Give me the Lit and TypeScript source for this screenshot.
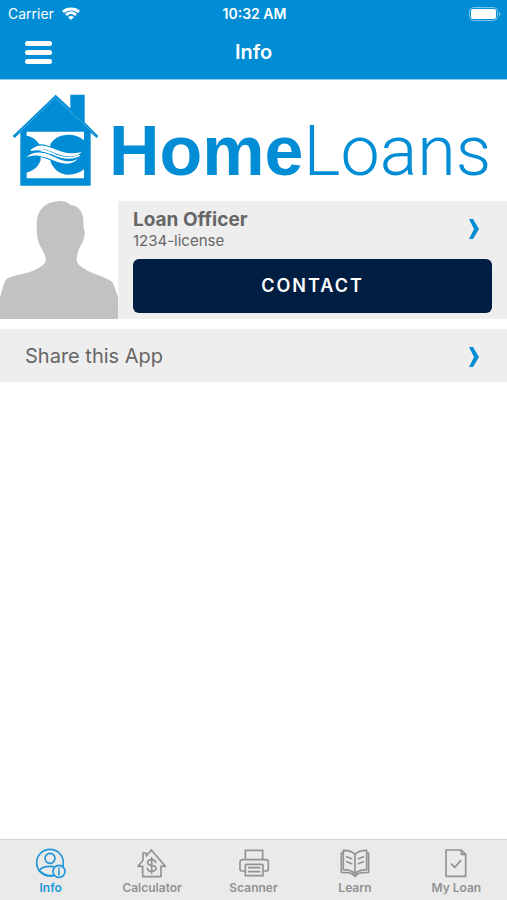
import { LitElement, html, css, svg } from "lit";
import { customElement, state } from "lit/decorators.js";
import { classMap } from "lit/directives/class-map.js";

const tabs = [
  {
    label: "Info",
    box: "108 36 96 96",
    icon: svg`
      <circle cx="153" cy="83" r="40"/>
      <circle cx="153" cy="70" r="15"/>
      <path d="M121 107C125 98 135 94 153 94C160 94 166 95 171 97M121 107C134 120 150 124 164 121"/>
      <circle cx="180" cy="109" r="18" class="knock"/>
      <path d="M180 107V119M180 99V101"/>`,
  },
  {
    label: "Calculator",
    box: "411 36 96 96",
    icon: svg`
      <path d="M457 45L499 94H486V125H431V94H417L432 76V54H442V63Z"/>
      <path d="M470 82C468 76 464 74 458 74C451 74 446 77 446 83C446 96 471 87 471 100C471 106 465 109 458 109C451 109 446 106 445 100M458 68V115"/>`,
  },
  {
    label: "Scanner",
    box: "112 36 96 96",
    icon: svg`
      <path d="M134 73V46H186V73M134 108H124Q118 108 118 102V82Q118 74 126 74H195Q203 74 203 82V102Q203 108 197 108H187"/>
      <path d="M134 122V91Q134 88 137 88H184Q187 88 187 91V122Z"/>
      <path d="M144 98H177M144 110H177"/>`,
  },
  {
    label: "Learn",
    box: "416 36 96 96",
    icon: svg`
      <path d="M464 58C456 49 442 46 429 46V104C442 104 456 107 464 117C472 107 486 104 499 104V46C486 46 472 49 464 58V117"/>
      <path d="M429 54H423V112C438 112 450 112 456 117L464 124L472 117C478 112 490 112 505 112V54H499"/>
      <path d="M439 65L454 71M439 80L454 86M489 65L474 71M489 80L474 86"/>`,
  },
  {
    label: "My Loan",
    box: "120 36 96 96",
    icon: svg`
      <path d="M138 45H184L197 58V124H138ZM184 45V58H197"/>
      <path d="M154 87L164 97L182 77"/>`,
  },
];

const chevron = html`<svg class="chevron" viewBox="0 0 12 20" aria-hidden="true">
  <path d="M1 0H5L11 10L5 20H1L6 10Z"/>
</svg>`;

@customElement("app-header")
class AppHeader extends LitElement {
  static styles = css`
    :host {
      display: block;
      background: #008dd5;
      color: #fff;
      border-bottom: 1px solid #8fcdec;
    }
    .status, .bar {
      display: grid;
      grid-template-columns: 1fr auto 1fr;
      align-items: center;
    }
    .status { height: 27px; padding: 0 6px 0 8px; font-size: 14px; }
    .carrier { display: flex; align-items: center; gap: 8px; }
    .time { font-weight: 600; }
    .wifi { width: 18px; height: 14px; fill: none; stroke: #fff; stroke-width: 3; }
    .wifi .dot { fill: #fff; stroke: none; }
    .battery { width: 32px; height: 14px; justify-self: end; }
    .bar { height: 50px; padding: 0 25px 2px; }
    .menu {
      display: flex; flex-direction: column; gap: 4px;
      width: 27px; padding: 0; border: 0; background: none; cursor: pointer;
    }
    .menu span { height: 5px; border-radius: 3px; background: #fff; }
    h1 { margin: 0; font-size: 20px; line-height: 24px; font-weight: 600; }
  `;
  render() {
    return html`
      <div class="status">
        <div class="carrier">
          <span>Carrier</span>
          <svg class="wifi" viewBox="0 0 18 14" aria-hidden="true">
            <path d="M1 5C5 1 13 1 17 5"/>
            <path d="M4 8C7 5 11 5 14 8"/>
            <path class="dot" d="M9 13L6 10Q9 8 12 10Z"/>
          </svg>
        </div>
        <div class="time">10:32 AM</div>
        <svg class="battery" viewBox="0 0 32 14" aria-hidden="true">
          <rect x="0.5" y="0.5" width="28" height="13" rx="4" fill="none" stroke="#7cc5ec"/>
          <rect x="2" y="2" width="25" height="10" rx="2" fill="#fff"/>
          <path d="M30 5Q33 7 30 9Z" fill="#7cc5ec"/>
        </svg>
      </div>
      <div class="bar">
        <button class="menu" aria-label="Menu"><span></span><span></span><span></span></button>
        <h1>Info</h1>
      </div>
    `;
  }
}

@customElement("brand-logo")
class BrandLogo extends LitElement {
  static styles = css`
    :host {
      display: flex; align-items: flex-start; gap: 9px;
      padding: 13px 12px 10px; color: #008dd5; white-space: nowrap;
    }
    .mark { flex: none; width: 88px; height: 96px; }
    .name { font: 700 70px/80px "Liberation Sans", Arial, sans-serif; padding-top: 18px; }
    .thin { font-family: Roboto, sans-serif; line-height: 0; font-weight: 300; }
  `;
  render() {
    return html`
      <svg class="mark" viewBox="36 24 264 288" aria-hidden="true">
        <path fill="#008dd5" d="M167 29L211 70V29H254V112L295 153L290 159L272 143V302H61V143L44 159L38 153Z"/>
        <path fill="none" stroke="#fff" stroke-width="2" opacity="0.4" d="M52 147L167 38L284 148"/>
        <path fill="#fff" d="M80 140H252V166C238 154 222 149 205 149C180 149 161 160 151 178L152 232C163 256 181 269 205 269C223 269 239 264 252 253V280H80V263C101 258 115 245 122 226V186C115 168 100 156 80 152Z"/>
        <g fill="#fff" stroke="#008dd5" stroke-width="7" stroke-linejoin="round" paint-order="stroke">
          <path d="M91 197C105 181 123 179 139 184C167 191 184 204 211 205C225 205 236 203 246 200C234 213 216 216 201 214C171 211 153 195 126 192C112 191 102 193 91 197Z"/>
          <path d="M79 217C92 203 114 200 135 205C161 212 178 228 205 229C218 229 226 225 234 221C222 235 203 238 188 235C161 229 144 216 116 212C102 211 90 213 79 217Z"/>
        </g>
        <path fill="none" stroke="#fff" stroke-width="5" stroke-linecap="round" d="M95 195C115 190 138 196 160 207C184 219 212 223 237 212"/>
      </svg>
      <div class="name">Home<span class="thin">Loans</span></div>
    `;
  }
}

@customElement("officer-card")
class OfficerCard extends LitElement {
  static styles = css`
    :host { display: flex; background: #eee; }
    .photo { flex: none; width: 118px; height: 118px; background: #fff; }
    .body { flex: 1; display: flex; flex-direction: column; padding: 7px 15px 6px; gap: 9px; }
    .profile {
      display: flex; align-items: center; justify-content: space-between;
      color: #666; text-decoration: none; padding-right: 12px;
    }
    .text { display: flex; flex-direction: column; }
    .title { font-size: 19px; line-height: 24px; font-weight: 700; }
    .license { font-size: 15px; line-height: 18px; }
    .chevron { width: 12px; height: 20px; fill: #008dd5; }
    .contact {
      height: 54px; border: 0; border-radius: 6px; background: #001d42; color: #fff;
      font: 600 18px/24px Inter, sans-serif; letter-spacing: 2px; cursor: pointer;
    }
  `;
  render() {
    return html`
      <svg class="photo" viewBox="0 17 354 354" aria-hidden="true">
        <path fill="#c2c2c2" d="M0 371V306C7 285 10 264 20 250C45 237 85 236 112 220C124 213 137 204 137 196C138 177 125 162 118 147C110 127 110 109 110 84C110 47 133 20 172 18C190 15 205 21 212 29C233 30 249 48 250 75C251 87 249 96 254 108C255 122 251 137 243 149C235 162 230 179 230 195C231 208 243 214 254 221C280 238 311 242 334 258C345 270 347 290 354 304V371Z"/>
      </svg>
      <div class="body">
        <a class="profile" href="#officer">
          <span class="text">
            <span class="title">Loan Officer</span>
            <span class="license">1234-license</span>
          </span>
          ${chevron}
        </a>
        <button class="contact">CONTACT</button>
      </div>
    `;
  }
}

@customElement("tab-bar")
class TabBar extends LitElement {
  @state() private current = "Info";

  static styles = css`
    :host { display: block; }
    nav { display: flex; background: #eaeaea; border-top: 1px solid #d2d2d2; }
    .tab {
      flex: 1; display: flex; flex-direction: column; align-items: center;
      padding: 7px 0 4px; border: 0; background: none; color: #929292;
      font: 600 12px/17px Inter, sans-serif; cursor: pointer;
    }
    .active { color: #2197d8; }
    svg {
      width: 32px; height: 32px; fill: none; stroke: currentColor;
      stroke-width: 5; stroke-linejoin: round; stroke-linecap: round;
    }
    .knock { fill: #eaeaea; }
  `;
  render() {
    return html`<nav>
      ${tabs.map(
        (t) => html`<button
          class=${classMap({ tab: true, active: t.label === this.current })}
          @click=${() => (this.current = t.label)}
        >
          <svg viewBox=${t.box} aria-hidden="true">${t.icon}</svg>
          <span>${t.label}</span>
        </button>`
      )}
    </nav>`;
  }
}

@customElement("app-root")
class AppRoot extends LitElement {
  static styles = css`
    :host {
      display: flex; flex-direction: column; min-height: 100vh;
      background: #fff; font-family: Inter, sans-serif;
    }
    main { flex: 1; }
    .share {
      display: flex; align-items: center; justify-content: space-between;
      margin-top: 10px; padding: 15px 27px 14px 25px;
      background: #eee; color: #666; text-decoration: none;
      font-size: 20px; line-height: 24px;
    }
    .chevron { width: 12px; height: 20px; fill: #008dd5; margin-top: 2px; }
  `;
  render() {
    return html`
      <app-header></app-header>
      <main>
        <brand-logo></brand-logo>
        <officer-card></officer-card>
        <a class="share" href="#share"><span>Share this App</span>${chevron}</a>
      </main>
      <tab-bar></tab-bar>
    `;
  }
}
